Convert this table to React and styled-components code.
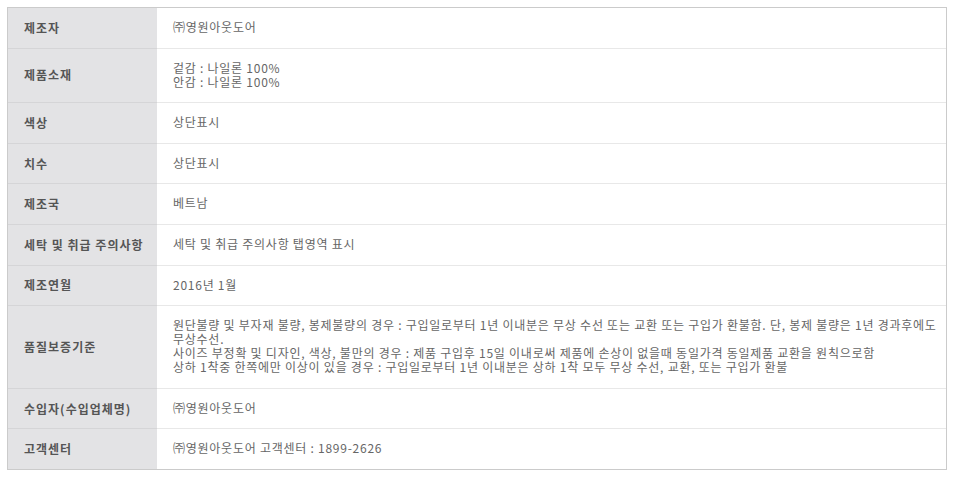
import React from 'react'
import styled, { createGlobalStyle } from 'styled-components'

const GlobalStyle = createGlobalStyle`
  html, body {
    margin: 0;
    padding: 0;
    background: #fff;
  }
  body {
    font-family: "Noto Sans CJK KR", "Noto Sans", sans-serif;
    font-size: 12px;
  }
`

const rows = [
  { label: '제조자', value: ['㈜영원아웃도어'] },
  { label: '제품소재', value: ['겉감 : 나일론 100%', '안감 : 나일론 100%'] },
  { label: '색상', value: ['상단표시'] },
  { label: '치수', value: ['상단표시'] },
  { label: '제조국', value: ['베트남'] },
  { label: '세탁 및 취급 주의사항', value: ['세탁 및 취급 주의사항 탭영역 표시'] },
  { label: '제조연월', value: ['2016년 1월'] },
  {
    label: '품질보증기준',
    value: [
      '원단불량 및 부자재 불량, 봉제불량의 경우 : 구입일로부터 1년 이내분은 무상 수선 또는 교환 또는 구입가 환불함. 단, 봉제 불량은 1년 경과후에도 무상수선.',
      '사이즈 부정확 및 디자인, 색상, 불만의 경우 : 제품 구입후 15일 이내로써 제품에 손상이 없을때 동일가격 동일제품 교환을 원칙으로함',
      '상하 1착중 한쪽에만 이상이 있을 경우 : 구입일로부터 1년 이내분은 상하 1착 모두 무상 수선, 교환, 또는 구입가 환불',
    ],
  },
  { label: '수입자(수입업체명)', value: ['㈜영원아웃도어'] },
  { label: '고객센터', value: ['㈜영원아웃도어 고객센터 : 1899-2626'] },
]

export default function App() {
  return (
    <Page>
      <GlobalStyle />
      <Table>
        {rows.map((row, i) => (
          <Row key={row.label}>
            <Label $first={i === 0}>{row.label}</Label>
            <Value $first={i === 0}>
              {row.value.map(line => (
                <Line key={line}>{line}</Line>
              ))}
            </Value>
          </Row>
        ))}
      </Table>
    </Page>
  )
}


const Page = styled.div`
  padding: 7px;
`

const Table = styled.div`
  width: 940px;
  box-sizing: border-box;
  border: 1px solid #cbcbcb;
`

const Row = styled.div`
  display: grid;
  grid-template-columns: 149px 1fr;
`

const Label = styled.div`
  display: flex;
  align-items: center;
  padding: 0 14px 1px 16px;
  background: #e3e3e5;
  border-top: ${props => props.$first ? 'none' : '1px solid #d5d5d7'};
  color: #555;
  font-weight: bold;
  letter-spacing: 1px;
  white-space: nowrap;
`

const Value = styled.div`
  padding: 12px 2px 13.6px 16px;
  border-top: ${props => props.$first ? 'none' : '1px solid #e8e8e8'};
  color: #666;
  line-height: 14px;
  letter-spacing: 0.75px;
`

const Line = styled.div`
  white-space: normal;
`
